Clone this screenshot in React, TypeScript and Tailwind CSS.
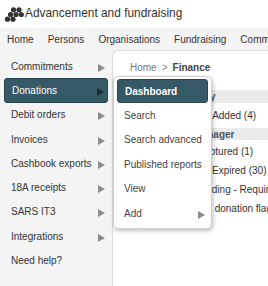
import React from "react";

// Left navigation of the finance module.
const SIDE_ITEMS = [
  { label: "Commitments", arrow: true },
  { label: "Donations", arrow: true, active: true },
  { label: "Debit orders", arrow: true },
  { label: "Invoices", arrow: true },
  { label: "Cashbook exports", arrow: true },
  { label: "18A receipts", arrow: true },
  { label: "SARS IT3", arrow: true },
  { label: "Integrations", arrow: true },
  { label: "Need help?", arrow: false },
];

const SUB_ITEMS = [
  { label: "Dashboard", active: true },
  { label: "Search" },
  { label: "Search advanced" },
  { label: "Published reports" },
  { label: "View" },
  { label: "Add", arrow: true },
];

const TOP_NAV = ["Home", "Persons", "Organisations", "Fundraising", "Communications"];

export default function App() {
  return (
    <div
      className="relative h-[286px] w-[268px] overflow-hidden bg-[#f4f4f4] text-[#333]"
      style={{ fontFamily: '"Liberation Sans", Arial, sans-serif' }}
    >
      <div className="flex h-[28px] items-center bg-white pl-[3px]">
        <Logo />
        <span className="ml-[1px] whitespace-nowrap text-[11.9px] text-[#333]">Advancement and fundraising</span>
      </div>

      <div className="flex h-[22px] items-center gap-[14px] whitespace-nowrap pl-[7px] text-[10px] text-[#333]">
        {TOP_NAV.map((n) => (
          <span key={n}>{n}</span>
        ))}
      </div>

      <div className="flex h-[236px]">
        <div className="w-[112px] shrink-0 pt-[4px]">
          {SIDE_ITEMS.map((it) => (
            <div
              key={it.label}
              className={`mx-[4px] flex h-[24.3px] items-center justify-between rounded-[3px] pl-[7px] pr-[3px] text-[10px] ${
                it.active ? "border border-[#2b4550] bg-[#365966] pl-[6px] text-white" : "text-[#333]"
              }`}
            >
              <span className="whitespace-nowrap">{it.label}</span>
              {it.arrow && <Arrow dark={it.active} />}
            </div>
          ))}
        </div>

        <div className="flex-1 rounded-tl-[6px] border-l border-t border-[#dcdcdc] bg-white">
          <div className="flex h-[32px] items-center gap-[5px] whitespace-nowrap pl-[17px] text-[10px]">
            <span className="text-[#777]">Home</span>
            <span className="text-[#888]">&gt;</span>
            <span className="font-bold text-[#444]">Finance</span>
          </div>
          <div className="h-[7px]" />
          <div className="flex h-[13px] items-center whitespace-nowrap bg-[#ebebeb] pl-[57px] text-[10px] font-bold text-[#555]">
            Summary
          </div>
          <div className="flex h-[25px] items-center whitespace-nowrap pl-[58px] text-[10px]">Recently Added (4)</div>
          <div className="flex h-[12px] items-center whitespace-nowrap bg-[#ebebeb] pl-[17px] text-[10px] font-bold text-[#555]">
            Relationship manager
          </div>
          <div className="h-[2px]" />
          <div className="flex h-[19px] items-center whitespace-nowrap pl-[84px] text-[10px]">Captured (1)</div>
          <div className="flex h-[19px] items-center whitespace-nowrap pl-[99px] text-[10px]">Expired (30)</div>
          <div className="flex h-[19px] items-center whitespace-nowrap pl-[81px] text-[10px]">Pending - Requires approval</div>
          <div className="flex h-[19px] items-center whitespace-nowrap pl-[65px] text-[10px]">Missing donation flags</div>
        </div>
      </div>

      {/* Donations submenu, opened over the page */}
      <div className="absolute left-[113px] top-[76px] w-[99px] rounded-[5px] border border-[#cfcfcf] bg-white px-[3px] pb-[3px] pt-[2px] shadow-[1px_2px_4px_rgba(0,0,0,0.25)]">
        {SUB_ITEMS.map((s) => (
          <div
            key={s.label}
            className={`flex h-[24.4px] items-center justify-between rounded-[3px] pl-[7px] pr-[3px] text-[10px] ${
              s.active ? "border border-[#2b4550] bg-[#365966] pl-[6px] font-bold text-white" : "text-[#444]"
            }`}
          >
            <span className="whitespace-nowrap">{s.label}</span>
            {s.arrow && <Arrow />}
          </div>
        ))}
      </div>
    </div>
  );
}

function Arrow({ dark = false }: { dark?: boolean }) {
  return (
    <svg width="7" height="8" viewBox="0 0 7 8" className="mt-[3px] shrink-0">
      <polygon points="0,0 7,4 0,8" fill={dark ? "#1c2b31" : "#8c8c8c"} />
    </svg>
  );
}

function Logo() {
  // seven dots in a slanted cluster
  const dots = [
    [10.5, 2.8],
    [16, 2.8],
    [7.5, 7.5],
    [13, 7.5],
    [18.3, 7.5],
    [4.5, 12.2],
    [10, 12.2],
  ];
  return (
    <svg width="21" height="15" viewBox="0 0 21 15" className="shrink-0">
      {dots.map(([x, y], i) => (
        <circle key={i} cx={x} cy={y} r="2.6" fill="#333" />
      ))}
    </svg>
  );
}
